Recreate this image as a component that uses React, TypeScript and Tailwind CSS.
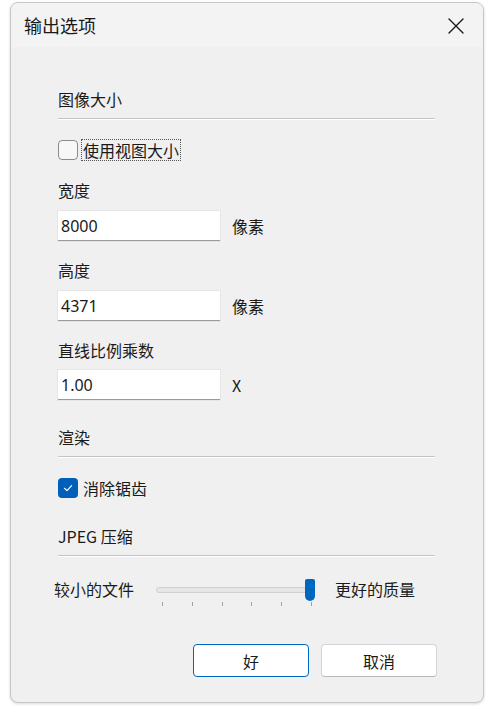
const font = { fontFamily: '"Noto Sans CJK SC", "Noto Sans", sans-serif' };

function Section({ title }: { title: string }) {
  return (
    <div>
      <div className="h-5 leading-5 text-[16px] text-[#1a1a1a]">{title}</div>
      <div className="mt-[9px] w-[377px] h-px bg-[#c4c4c4] border-b border-white box-content" />
    </div>
  );
}

function Field({ label, value, unit, top, gap = 11 }: { label: string; value: string; unit: string; top: number; gap?: number }) {
  return (
    <div style={{ marginTop: top }}>
      <div className="h-5 leading-5 text-[16px] text-[#1a1a1a]">{label}</div>
      <div className="flex items-center h-[30px]" style={{ marginTop: gap }}>
        <div className="w-[162px] h-[30px] bg-white border-b border-[#9a9a9a] shadow-[0_0_0_1px_#e6e6e6] pl-[3px] flex items-center text-[16px] text-[#1a1a1a]" style={{ fontFamily: '"Noto Sans", sans-serif' }}>
          {value}
        </div>
        <span className="ml-[12px] text-[16px] leading-5 text-[#1a1a1a]">{unit}</span>
      </div>
    </div>
  );
}

export default function App() {
  const ticks = [0, 1, 2, 3, 4, 5];
  return (
    <div className="w-[494px] h-[713px] bg-white pt-[2px] pl-[10px]" style={font}>
      <div className="w-[474px] h-[701px] border border-[#c6c6c6] rounded-lg bg-[#f0f0f0] overflow-hidden relative shadow-[0_1px_3px_rgba(0,0,0,0.15)]">
        <div className="h-[44px] bg-[#f3f3f3] flex items-center justify-between pl-[13px] pr-[19px]">
          <span className="text-[18px] leading-6 text-[#1a1a1a]">输出选项</span>
          <svg width="16" height="16" viewBox="0 0 16 16" fill="none" className="mt-[2px]">
            <path d="M1 1 L15 15 M15 1 L1 15" stroke="#1a1a1a" strokeWidth="1.4" strokeLinecap="round" />
          </svg>
        </div>

        <div className="pl-[47px] pt-[42px]">
          <Section title="图像大小" />

          <div className="mt-[20px] flex items-center h-5">
            <div className="w-[20px] h-[20px] rounded-[4px] border border-[#8a8a8a] bg-[#f7f7f7]" />
            <span className="ml-[3px] px-[1px] h-[22px] leading-[20px] border border-dotted border-[#555] text-[16px] text-[#1a1a1a]">使用视图大小</span>
          </div>

          <Field label="宽度" value="8000" unit="像素" top={20} />
          <Field label="高度" value="4371" unit="像素" top={19} />
          <Field label="直线比例乘数" value="1.00" unit="X" top={19} gap={10} />

          <div className="mt-[27px]">
            <Section title="渲染" />
          </div>

          <div className="mt-[20px] flex items-center h-5">
            <div className="w-[20px] h-[20px] rounded-[4px] bg-[#005fb8] flex items-center justify-center">
              <svg width="12" height="12" viewBox="0 0 12 12" fill="none">
                <path d="M2.5 6.3 L5 8.6 L9.6 3.6" stroke="white" strokeWidth="1.2" strokeLinecap="round" strokeLinejoin="round" />
              </svg>
            </div>
            <span className="ml-[5px] text-[16px] leading-5 text-[#1a1a1a]">消除锯齿</span>
          </div>

          <div className="mt-[28px]">
            <Section title="JPEG 压缩" />
          </div>
        </div>

        <div className="mt-[20px] pl-[43px] flex items-start">
          <span className="text-[16px] leading-[24px] text-[#1a1a1a] w-[102px]">较小的文件</span>
          <div className="relative w-[160px] h-[34px]">
            <div className="absolute left-0 top-[10px] w-[154px] h-[6px] rounded-full bg-[#e6e6e6] border border-[#d0d0d0]" />
            <div className="absolute left-[149px] top-[2px] w-[10px] h-[22px] bg-[#0067c0] rounded-t-[2px] rounded-b-[5px]" />
            {ticks.map((t) => (
              <div key={t} className="absolute top-[25px] w-px h-[4px] bg-[#a0a0a0]" style={{ left: 6 + t * 29.8 }} />
            ))}
          </div>
          <span className="ml-[19px] text-[16px] leading-[24px] text-[#1a1a1a]">更好的质量</span>
        </div>

        <div className="absolute left-[182px] top-[641px] flex gap-[12px]">
          <button className="w-[116px] h-[33px] rounded-[4px] bg-white border border-[#0067c0] text-[16px] text-[#1a1a1a]">好</button>
          <button className="w-[116px] h-[33px] rounded-[4px] bg-white border border-[#d4d4d4] border-b-[#b8b8b8] text-[16px] text-[#1a1a1a]">取消</button>
        </div>
      </div>
    </div>
  );
}
